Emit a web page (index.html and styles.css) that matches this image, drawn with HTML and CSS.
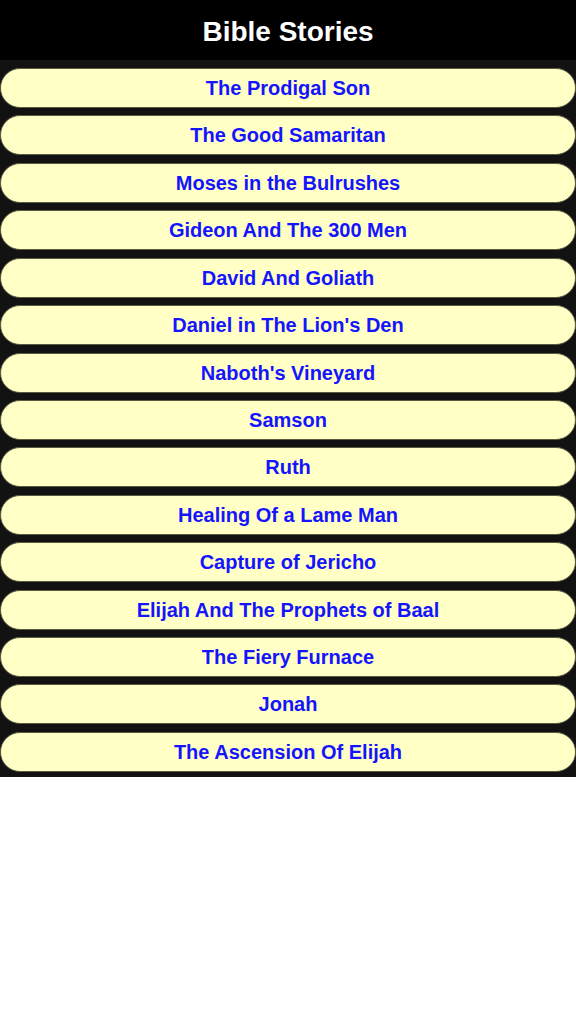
FILE: index.html
```html
<!DOCTYPE html>
<html>
<head>
<meta charset="utf-8">
<link rel="stylesheet" href="styles.css">
</head>
<body>
<header class="header">Bible Stories</header>
<nav class="list">
  <a class="item">The Prodigal Son</a>
  <a class="item">The Good Samaritan</a>
  <a class="item">Moses in the Bulrushes</a>
  <a class="item">Gideon And The 300 Men</a>
  <a class="item">David And Goliath</a>
  <a class="item">Daniel in The Lion's Den</a>
  <a class="item">Naboth's Vineyard</a>
  <a class="item">Samson</a>
  <a class="item">Ruth</a>
  <a class="item">Healing Of a Lame Man</a>
  <a class="item">Capture of Jericho</a>
  <a class="item">Elijah And The Prophets of Baal</a>
  <a class="item">The Fiery Furnace</a>
  <a class="item">Jonah</a>
  <a class="item">The Ascension Of Elijah</a>
</nav>
</body>
</html>
```
FILE: styles.css
```css
html, body {
  margin: 0;
  padding: 0;
  background: #ffffff;
  font-family: "Liberation Sans", Arial, sans-serif;
}
.header {
  height: 60px;
  background: #000000;
  color: #ffffff;
  font-weight: bold;
  font-size: 28px;
  display: flex;
  align-items: center;
  justify-content: center;
  padding-top: 3px;
  box-sizing: border-box;
}
.list {
  background: #121212;
  display: flex;
  flex-direction: column;
  gap: 7.43px;
  padding: 8px 0 5px 0;
}
.item {
  height: 40px;
  box-sizing: border-box;
  border: 1px solid #5a5a40;
  border-radius: 20px;
  background: #ffffc6;
  color: #1414ff;
  font-weight: bold;
  font-size: 20px;
  display: flex;
  align-items: center;
  justify-content: center;
  padding-top: 1px;
}
```
